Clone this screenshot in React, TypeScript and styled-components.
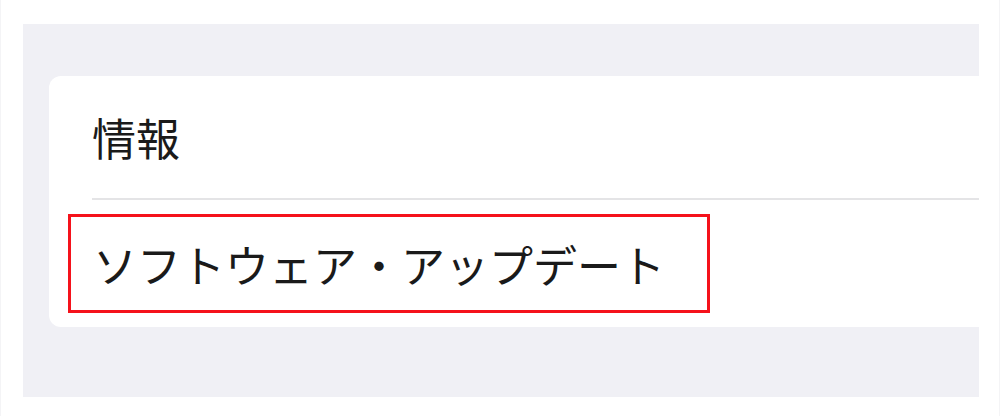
import styled, { createGlobalStyle } from 'styled-components';

const GlobalStyle = createGlobalStyle`
  html, body {
    margin: 0;
    padding: 0;
    background: #ffffff;
  }
  body {
    font-family: "Noto Sans CJK JP", "Noto Sans", sans-serif;
  }
`

const Page = styled.div`
  width: 1000px;
  height: 416px;
  box-sizing: border-box;
  padding: 24px 20px 0 22px;
  border-left: 1px solid #f4f4f6;
  border-right: 1px solid #f4f4f6;
`

const Panel = styled.div`
  height: 373px;
  background: #f0f0f5;
  padding-top: 52px;
  padding-left: 26px;
  box-sizing: border-box;
  overflow: hidden;
`

const Card = styled.div`
  background: #ffffff;
  border-radius: 12px 0 0 12px;
  height: 251px;
  display: flex;
  flex-direction: column;
`

const Row = styled.div<{ $divider?: boolean }>`
  display: flex;
  align-items: center;
  height: ${props => props.$divider ? "122px" : "127px"};
  margin-left: ${props => props.$divider ? "43px" : "19px"};
  border-bottom: ${props => props.$divider ? "2px solid #e4e4e6" : "none"};
`

const Label = styled.span`
  font-size: 44px;
  line-height: 1;
  color: #1a1a1a;
  letter-spacing: 0;
  white-space: nowrap;
`

const Highlight = styled.div`
  display: flex;
  align-items: center;
  box-sizing: border-box;
  width: 642px;
  height: 99px;
  padding-left: 22px;
  border: 3px solid #f5121b;
`

const App = () => {
  return (
    <>
      <GlobalStyle />
      <Page>
        <Panel>
          <Card>
            <Row $divider>
              <Label>情報</Label>
            </Row>
            <Row>
              <Highlight>
                <Label>ソフトウェア・アップデート</Label>
              </Highlight>
            </Row>
          </Card>
        </Panel>
      </Page>
    </>
  )
}

export default App;
